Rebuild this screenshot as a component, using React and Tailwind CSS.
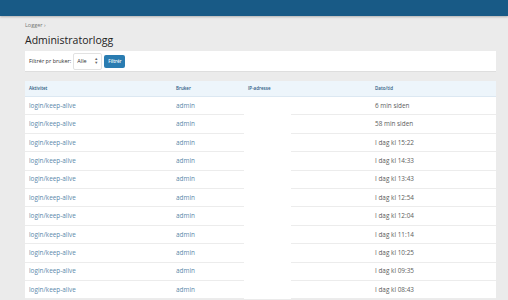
const rows = [
  '6 min siden',
  '58 min siden',
  'I dag kl 15:22',
  'I dag kl 14:33',
  'I dag kl 13:43',
  'I dag kl 12:54',
  'I dag kl 12:04',
  'I dag kl 11:14',
  'I dag kl 10:25',
  'I dag kl 09:35',
  'I dag kl 08:43',
];

export default function App() {
  return (
    <div className="min-h-[300px] h-[300px] overflow-hidden bg-[#ebebeb] font-['Open_Sans',sans-serif]">
      {/* Top bar */}
      <div className="h-[16px] bg-[#185a86] shadow-[0_1px_2px_rgba(0,0,0,0.25)]" />

      <div className="pl-[25px] pr-[12px]">
        {/* Breadcrumb */}
        <div className="mt-[6px] text-[5.5px] leading-[7px] text-[#777]">Logger ›</div>
        <h1 className="mt-[4px] text-[10.5px] leading-[14px] text-[#222]">Administratorlogg</h1>

        {/* Filter */}
        <div className="mt-[4px] h-[21px] bg-white border-b border-[#dedede] flex items-center px-[4px] gap-[2px]">
          <span className="text-[5.5px] text-[#333]">Filtrér pr bruker:</span>
          <div className="w-[29px] h-[17px] border border-[#e2e2e2] rounded-[2px] flex items-center justify-between px-[3px] text-[5.5px] text-[#333]">
            <span>Alle</span>
            <span className="text-[4px] leading-[4px] text-[#666] flex flex-col items-center">
              <span>▲</span>
              <span>▼</span>
            </span>
          </div>
          <button className="h-[13px] px-[4px] bg-[#2a7cb1] rounded-[2px] text-white text-[4.5px] font-semibold">Filtrér</button>
        </div>

        {/* Table */}
        <div className="relative mt-[9px] bg-white">
          <div className="grid grid-cols-[147px_72px_127px_1fr] h-[16px] bg-[#edf5fb] border-b border-[#dce8f2] items-center text-[4.5px] font-semibold text-[#2c5a82]">
            <div className="pl-[4px]">Aktivitet</div>
            <div className="pl-[4px]">Bruker</div>
            <div className="pl-[4px]">IP-adresse</div>
            <div className="pl-[4px]">Dato/tid</div>
          </div>
          {rows.map((d, i) => (
            <div key={i} className="grid grid-cols-[147px_72px_127px_1fr] h-[18.4px] border-b border-[#ececec] items-center text-[6.4px]">
              <div className="pl-[4px] text-[#5a88aa]">login/keep-alive</div>
              <div className="pl-[4px] text-[#5a88aa]">admin</div>
              <div />
              <div className="pl-[4px] text-[#5c5c5c]">{d}</div>
            </div>
          ))}
          {/* redacted IP column */}
          <div className="absolute left-[219px] top-[17px] w-[47px] bottom-0 bg-white" />
        </div>
      </div>
    </div>
  );
}
